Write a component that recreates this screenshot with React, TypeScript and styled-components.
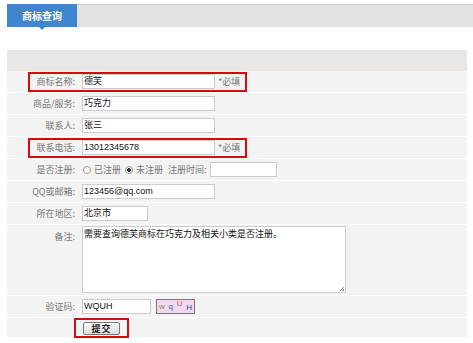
import styled, { createGlobalStyle } from "styled-components";

const GlobalStyle = createGlobalStyle`
  html, body {
    margin: 0;
    padding: 0;
    background: #fff;
  }
  body {
    font-family: "Noto Sans CJK SC", "Liberation Sans", sans-serif;
  }
`;

const Page = styled.div`
  width: 473px;
  height: 343px;
  padding-top: 4px;
  box-sizing: border-box;
  overflow: hidden;
`;

const TabBar = styled.div`
  display: flex;
  height: 23px;
  margin-left: 7px;
`;

const Tab = styled.div`
  position: relative;
  width: 70px;
  background: #3e86cf;
  color: #fff;
  font-size: 10px;
  font-weight: bold;
  display: flex;
  align-items: center;
  justify-content: center;

  &::after {
    content: "";
    position: absolute;
    left: 32px;
    bottom: -3px;
    border-left: 3px solid transparent;
    border-right: 3px solid transparent;
    border-top: 3px solid #3e86cf;
  }
`;

const TabRest = styled.div`
  flex: 1;
  background: #e2e2e2;
  border-top: 1px solid #cacaca;
`;

const Panel = styled.div`
  width: 460px;
  margin: 23px 0 0 7px;
`;

const Header = styled.div`
  height: 21px;
  background: #e8e7e5;
`;

const Row = styled.div<{ $h?: number; $top?: boolean; $first?: boolean }>`
  position: relative;
  display: flex;
  align-items: ${(p) => (p.$top ? "flex-start" : "center")};
  height: ${(p) => p.$h ?? 21}px;
  margin-top: ${(p) => (p.$first ? 0 : 1)}px;
  background: #f3f3f3;
`;

const Label = styled.div<{ $pt?: number }>`
  width: 68px;
  margin-right: 7px;
  padding-top: ${(p) => p.$pt ?? 0}px;
  text-align: right;
  font-size: 9px;
  color: #777;
  white-space: nowrap;
`;

const Input = styled.div<{ $w: number }>`
  width: ${(p) => p.$w}px;
  height: 15px;
  box-sizing: border-box;
  border: 1px solid #cccccc;
  background: #fff;
  font-size: 9px;
  line-height: 13px;
  padding-left: 1px;
  color: #111;
  font-family: "Liberation Sans", "Noto Sans CJK SC", sans-serif;
  white-space: nowrap;
  overflow: hidden;
`;

const TextArea = styled.div`
  position: relative;
  width: 264px;
  height: 67px;
  margin-top: 1px;
  box-sizing: border-box;
  border: 1px solid #cccccc;
  background: #fff;
  font-size: 9px;
  line-height: 13px;
  padding-left: 1px;
  color: #111;

  &::after {
    content: "";
    position: absolute;
    right: 1px;
    bottom: 1px;
    width: 4px;
    height: 4px;
    background: linear-gradient(135deg, transparent 45%, #999 45%, #999 55%, transparent 55%, transparent 75%, #999 75%);
  }
`;

const Hint = styled.span`
  margin-left: 3px;
  font-size: 9px;
  color: #777;
`;

const Mark = styled.div<{ $w: number }>`
  position: absolute;
  left: 21px;
  top: 1px;
  width: ${(p) => p.$w}px;
  height: 20px;
  box-sizing: border-box;
  border: 2px solid #d20d0d;
  pointer-events: none;
`;

const Radio = styled.span<{ $on?: boolean }>`
  display: inline-block;
  width: 6px;
  height: 6px;
  border-radius: 50%;
  border: 1px solid #999;
  background: ${(p) => (p.$on ? "radial-gradient(circle, #333 40%, #fff 50%)" : "#fff")};
  margin: 0 3px 0 1px;
`;

const RadioText = styled.span<{ $gap?: number }>`
  font-size: 9px;
  color: #777;
  margin-right: ${(p) => p.$gap ?? 0}px;
  white-space: nowrap;
`;

const Captcha = styled.div`
  display: flex;
  align-items: flex-end;
  justify-content: space-between;
  margin-left: 5px;
  width: 39px;
  height: 15px;
  box-sizing: border-box;
  border: 1px solid #777;
  background: #f3d7f0;
  padding: 0 2px 1px;
  font-family: "Liberation Sans", sans-serif;
  font-size: 8px;
  line-height: 9px;
`;

const CaptchaChar = styled.span<{ $c: string; $up?: number }>`
  color: ${(p) => p.$c};
  margin-bottom: ${(p) => p.$up ?? 0}px;
`;

const SubmitFrame = styled.div`
  margin-left: 67px;
  height: 20px;
  box-sizing: border-box;
  border: 2px solid #d20d0d;
  padding: 1px 7px 0;
  display: flex;
  align-items: center;
`;

const Button = styled.div`
  width: 37px;
  height: 13px;
  box-sizing: border-box;
  border: 1px solid #777;
  border-radius: 2px;
  background: linear-gradient(#fafafa, #dcdcdc);
  font-size: 9px;
  font-weight: bold;
  color: #222;
  display: flex;
  align-items: center;
  justify-content: center;
  letter-spacing: 1px;
`;

const App = () => (
  <Page>
    <GlobalStyle />
    <TabBar>
      <Tab>商标查询</Tab>
      <TabRest />
    </TabBar>

    <Panel>
      <Header />
      <Row $first>
        <Label>商标名称:</Label>
        <Input $w={133}>德芙</Input>
        <Hint>*必填</Hint>
        <Mark $w={219} />
      </Row>
      <Row>
        <Label>商品/服务:</Label>
        <Input $w={133}>巧克力</Input>
      </Row>
      <Row>
        <Label>联系人:</Label>
        <Input $w={133}>张三</Input>
      </Row>
      <Row>
        <Label>联系电话:</Label>
        <Input $w={133}>13012345678</Input>
        <Hint>*必填</Hint>
        <Mark $w={219} />
      </Row>
      <Row>
        <Label>是否注册:</Label>
        <Radio />
        <RadioText $gap={3}>已注册</RadioText>
        <Radio $on />
        <RadioText $gap={5}>未注册</RadioText>
        <RadioText $gap={3}>注册时间:</RadioText>
        <Input $w={67} />
      </Row>
      <Row>
        <Label>QQ或邮箱:</Label>
        <Input $w={133}>123456@qq.com</Input>
      </Row>
      <Row>
        <Label>所在地区:</Label>
        <Input $w={66}>北京市</Input>
      </Row>
      <Row $h={70} $top>
        <Label $pt={5}>备注:</Label>
        <TextArea>需要查询德芙商标在巧克力及相关小类是否注册。</TextArea>
      </Row>
      <Row>
        <Label>验证码:</Label>
        <Input $w={69}>WQUH</Input>
        <Captcha>
          <CaptchaChar $c="#8a8a3a" $up={1}>w</CaptchaChar>
          <CaptchaChar $c="#2a6a8a" $up={1}>q</CaptchaChar>
          <CaptchaChar $c="#b06a6a" $up={4}>U</CaptchaChar>
          <CaptchaChar $c="#2a4aa0">H</CaptchaChar>
        </Captcha>
      </Row>
      <Row $h={19}>
        <SubmitFrame>
          <Button>提交</Button>
        </SubmitFrame>
      </Row>
    </Panel>
  </Page>
);

export default App;
